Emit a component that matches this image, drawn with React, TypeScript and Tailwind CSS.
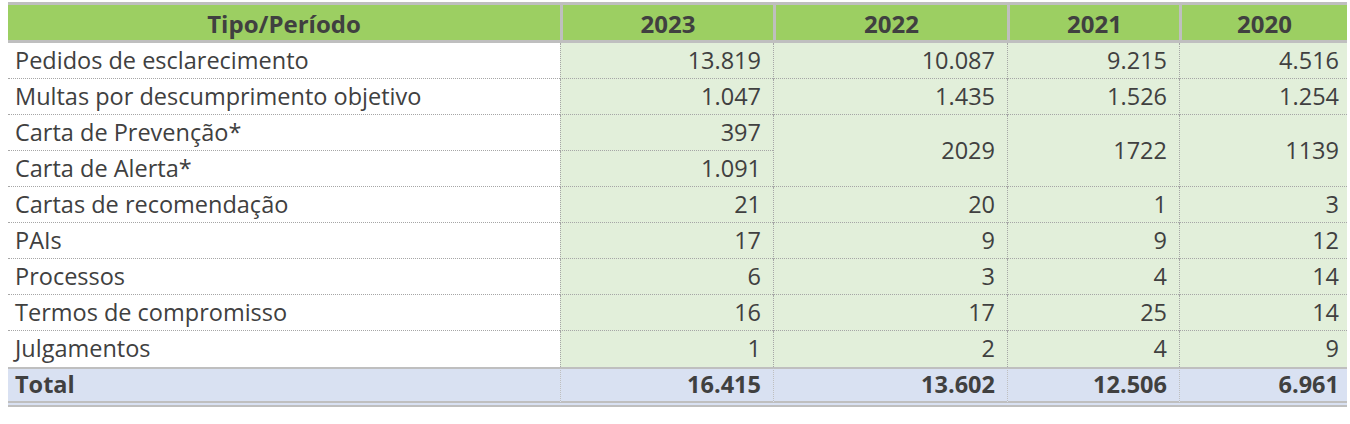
import React from "react";

type Row = { label: string; values: (string | null)[] };

const years = ["2023", "2022", "2021", "2020"];

const rows: Row[] = [
  { label: "Pedidos de esclarecimento", values: ["13.819", "10.087", "9.215", "4.516"] },
  { label: "Multas por descumprimento objetivo", values: ["1.047", "1.435", "1.526", "1.254"] },
  { label: "Carta de Prevenção*", values: ["397", "2029", "1722", "1139"] },
  { label: "Carta de Alerta*", values: ["1.091", null, null, null] },
  { label: "Cartas de recomendação", values: ["21", "20", "1", "3"] },
  { label: "PAIs", values: ["17", "9", "9", "12"] },
  { label: "Processos", values: ["6", "3", "4", "14"] },
  { label: "Termos de compromisso", values: ["16", "17", "25", "14"] },
  { label: "Julgamentos", values: ["1", "2", "4", "9"] },
];

const total = ["16.415", "13.602", "12.506", "6.961"];

export default function App() {
  return (
    <div className="w-[1350px] h-[424px] bg-white pl-2 pt-[2px] font-['Open_Sans',sans-serif] text-[#404040] text-[23.5px]">
      <table className="table-fixed w-[1339px] border-separate border-spacing-0">
        <colgroup>
          <col className="w-[552px]" />
          <col className="w-[213px]" />
          <col className="w-[234px]" />
          <col className="w-[172px]" />
          <col className="w-[168px]" />
        </colgroup>
        <thead>
          <tr className="h-[41px]">
            <th className="bg-[#9ccf62] border-y-[3px] border-[#bfbfbf] font-bold text-center text-[24px] pt-[3px] leading-none">
              Tipo/Período
            </th>
            {years.map((y) => (
              <th
                key={y}
                className="bg-[#9ccf62] border-y-[3px] border-l-[3px] border-[#bfbfbf] font-bold text-center text-[24px] pt-[3px] leading-none"
              >
                {y}
              </th>
            ))}
          </tr>
        </thead>
        <tbody>
          {rows.map((r, i) => {
            const last = i === rows.length - 1;
            const rowBorder = last ? "" : "border-b border-dotted border-[#a6a6a6]";
            return (
              <tr key={r.label} className="h-[36px]">
                <td className={`bg-white pl-[7px] leading-none whitespace-nowrap ${rowBorder}`}>{r.label}</td>
                {r.values.map((v, j) => {
                  if (v === null) return null;
                  const span = i === 2 && j > 0 ? 2 : 1;
                  return (
                    <td
                      key={j}
                      rowSpan={span}
                      className={`bg-[#e2efda] text-right leading-none border-l border-dotted border-[#a6a6a6] ${
                        j === 3 ? "pr-2" : "pr-3"
                      } ${rowBorder}`}
                    >
                      {v}
                    </td>
                  );
                })}
              </tr>
            );
          })}
          <tr className="h-[40px]">
            <td className="bg-[#d9e1f2] pl-[7px] font-bold leading-none border-t-2 border-b-[6px] border-double border-[#bfbfbf] [border-top-style:solid]">
              Total
            </td>
            {total.map((t, j) => (
              <td
                key={j}
                className={`bg-[#d9e1f2] text-right font-bold leading-none border-t-2 border-b-[6px] border-l border-[#bfbfbf] [border-top-style:solid] [border-bottom-style:double] [border-left-style:dotted] ${
                  j === 3 ? "pr-2" : "pr-3"
                }`}
              >
                {t}
              </td>
            ))}
          </tr>
        </tbody>
      </table>
    </div>
  );
}
